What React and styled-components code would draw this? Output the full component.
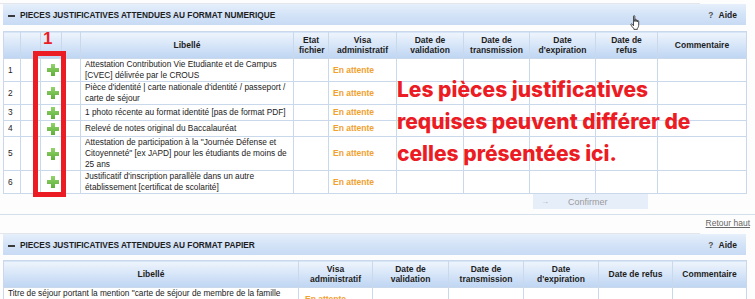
import React from 'react';
import styled, { createGlobalStyle } from 'styled-components';

const BORDER = '#c9d8ea';
const ORANGE = '#f0a12e';
const RED = '#ec1c24';

const GlobalStyle = createGlobalStyle`
  html, body {
    margin: 0;
    padding: 0;
    background: #fff;
  }
  body {
    font-family: "Liberation Sans", Arial, sans-serif;
    color: #222;
  }
`;

const numericRows = [
  { n: 1, label: 'Attestation Contribution Vie Etudiante et de Campus [CVEC] délivrée par le CROUS' },
  { n: 2, label: "Pièce d'identité | carte nationale d'identité / passeport / carte de séjour" },
  { n: 3, label: '1 photo récente au format identité [pas de format PDF]' },
  { n: 4, label: 'Relevé de notes original du Baccalauréat' },
  { n: 5, label: 'Attestation de participation à la "Journée Défense et Citoyenneté" [ex JAPD] pour les étudiants de moins de 25 ans' },
  { n: 6, label: "Justificatif d'inscription parallèle dans un autre établissement [certificat de scolarité]" },
];

const numericCols = [17, 20, 21, 19, 213, 35, 68, 67, 66, 66, 62, 89];
const paperCols = [295, 74, 76, 75, 75, 74, 74];

function PlusIcon() {
  return (
    <svg width="12" height="12" viewBox="0 0 12 12">
      <defs>
        <linearGradient id="pg" x1="0" y1="0" x2="0" y2="1">
          <stop offset="0" stopColor="#93d46c" />
          <stop offset="1" stopColor="#5eae38" />
        </linearGradient>
      </defs>
      <path d="M4 0h4v4h4v4H8v4H4V8H0V4h4z" fill="url(#pg)" />
    </svg>
  );
}

function HandCursor() {
  return (
    <svg width="12" height="16" viewBox="0 0 12 16">
      <path
        d="M3.5 1.2c0-.7 1.3-.7 1.3 0v5.3V4.8c0-.7 1.3-.7 1.3 0v1.7-1c0-.7 1.3-.7 1.3 0v1.3-.6c0-.7 1.3-.7 1.3 0v4c0 1.6-.9 2.6-1.3 3.2v1H3.9v-1C3 13.2 1.3 10.8 1 9.8c-.3-.9.7-1.3 1.2-.6l1.3 1.6z"
        fill="#fff"
        stroke="#222"
        strokeWidth="0.8"
        strokeLinejoin="round"
      />
    </svg>
  );
}

function SectionHeader({ title }) {
  return (
    <Bar>
      <BarTitle>
        <Collapse />
        {title}
      </BarTitle>
      <Help>
        <span className="q">?</span> Aide
      </Help>
    </Bar>
  );
}

export default function App() {
  return (
    <Page>
      <GlobalStyle />
      <Section>
        <TopRule $width={700} />
        <SectionHeader title="PIECES JUSTIFICATIVES ATTENDUES AU FORMAT NUMERIQUE" />
        <Table>
          <colgroup>
            {numericCols.map((w, i) => (
              <col key={i} style={{ width: w }} />
            ))}
          </colgroup>
          <thead>
            <tr>
              <Th />
              <Th />
              <Th />
              <Th />
              <Th>Libellé</Th>
              <Th>Etat fichier</Th>
              <Th>Visa administratif</Th>
              <Th>Date de validation</Th>
              <Th>Date de transmission</Th>
              <Th>Date d'expiration</Th>
              <Th>Date de refus</Th>
              <Th>Commentaire</Th>
            </tr>
          </thead>
          <tbody>
            {numericRows.map((r) => (
              <tr key={r.n}>
                <Td>{r.n}</Td>
                <Td />
                <Td $center>
                  <PlusIcon />
                </Td>
                <Td />
                <Td>{r.label}</Td>
                <Td />
                <Td>
                  <Status>En attente</Status>
                </Td>
                <Td />
                <Td />
                <Td />
                <Td />
                <Td />
              </tr>
            ))}
          </tbody>
        </Table>
        <ButtonRow>
          <ConfirmButton>
            <span className="arrow">→</span>
            Confirmer
          </ConfirmButton>
        </ButtonRow>
      </Section>

      <FullRule />
      <BackTop>
        <a>Retour haut</a>
      </BackTop>

      <Section>
        <TopRule $width={700} />
        <SectionHeader title="PIECES JUSTIFICATIVES ATTENDUES AU FORMAT PAPIER" />
        <Table $gap={5}>
          <colgroup>
            {paperCols.map((w, i) => (
              <col key={i} style={{ width: w }} />
            ))}
          </colgroup>
          <thead>
            <tr>
              <Th>Libellé</Th>
              <Th>Visa administratif</Th>
              <Th>Date de validation</Th>
              <Th>Date de transmission</Th>
              <Th>Date d'expiration</Th>
              <Th>Date de refus</Th>
              <Th>Commentaire</Th>
            </tr>
          </thead>
          <tbody>
            <tr>
              <Td>
                Titre de séjour portant la mention "carte de séjour de membre de la famille d'un citoyen de l'Union"
              </Td>
              <Td $pad={6}>
                <Status>En attente</Status>
              </Td>
              <Td />
              <Td />
              <Td />
              <Td />
              <Td />
            </tr>
          </tbody>
        </Table>
      </Section>

      <Marker>1</Marker>
      <MarkerBox />
      <Notice>
        Les pièces justificatives
        <br />
        requises peuvent différer de
        <br />
        celles présentées ici.
      </Notice>
      <Cursor>
        <HandCursor />
      </Cursor>
    </Page>
  );
}

const Page = styled.div`
  position: relative;
  width: 755px;
  height: 299px;
  overflow: hidden;
  padding-top: 3px;
  box-sizing: border-box;
  background: #fdfdfd;
`;

const Section = styled.section`
  padding: 0 9px 0 3px;
`;

const TopRule = styled.div`
  width: ${(p) => p.$width}px;
  height: 1px;
  margin-left: -3px;
  background: #e3e6ea;
`;

const Bar = styled.div`
  height: 21px;
  display: flex;
  align-items: center;
  justify-content: space-between;
  padding: 0 9px 0 5px;
  background: linear-gradient(to bottom, #e6effb 0%, #d2e2f7 55%, #c8dbf4 100%);
  font-size: 8.3px;
  font-weight: bold;
  color: #1d1d1d;
`;

const BarTitle = styled.div`
  display: flex;
  align-items: center;
`;

const Collapse = styled.span`
  display: inline-block;
  width: 7px;
  height: 2px;
  background: #3a3a3a;
  margin-right: 5px;
  margin-top: 2px;
`;

const Help = styled.div`
  font-size: 8.5px;

  .q {
    color: #555;
    margin-right: 3px;
  }
`;

const Table = styled.table`
  width: 743px;
  margin-top: ${(p) => p.$gap ?? 6}px;
  border-collapse: collapse;
  table-layout: fixed;
  font-size: 8.3px;
  line-height: 11px;
`;

const Th = styled.th`
  height: 27px;
  box-sizing: border-box;
  padding: 0 5px;
  border: 1px solid ${BORDER};
  background: linear-gradient(to bottom, #eef4fc 0%, #d6e5f8 50%, #bed5f2 100%);
  font-weight: bold;
  font-size: 8.5px;
  line-height: 10px;
  text-align: center;
  vertical-align: middle;
  color: #1d1d1d;
`;

const Td = styled.td`
  height: 16px;
  box-sizing: border-box;
  padding: 0 1px 0 ${(p) => p.$pad ?? 4}px;
  border: 1px solid ${BORDER};
  background: #fff;
  vertical-align: middle;
  text-align: ${(p) => (p.$center ? 'center' : 'left')};
  color: #222;
  overflow: hidden;

  svg {
    display: block;
    margin: 0 auto;
  }
`;

const Status = styled.span`
  color: ${ORANGE};
  font-weight: bold;
  font-size: 8.5px;
`;

const ButtonRow = styled.div`
  display: flex;
  justify-content: flex-end;
  padding-right: 98px;
`;

const ConfirmButton = styled.div`
  width: 115px;
  height: 15px;
  display: flex;
  align-items: center;
  background: #e6eefa;
  color: #9a9a9a;
  font-size: 9px;
  box-sizing: border-box;
  padding-left: 8px;

  .arrow {
    font-size: 8px;
    margin-right: 19px;
    color: #a8b4c4;
  }
`;

const FullRule = styled.div`
  height: 1px;
  margin-top: 5px;
  background: #d6e0ec;
`;

const BackTop = styled.div`
  display: flex;
  justify-content: flex-end;
  padding: 3px 5px 0 0;
  height: 15px;
  font-size: 8.5px;

  a {
    color: #666;
    text-decoration: underline;
  }
`;

const Marker = styled.div`
  position: absolute;
  left: 43px;
  top: 29px;
  font-size: 17px;
  font-weight: bold;
  color: ${RED};
`;

const MarkerBox = styled.div`
  position: absolute;
  left: 33px;
  top: 51px;
  width: 33px;
  height: 146px;
  box-sizing: border-box;
  border: 5px solid ${RED};
`;

const Notice = styled.div`
  position: absolute;
  left: 397px;
  top: 74px;
  font-family: Inter, "Open Sans", sans-serif;
  font-weight: 800;
  font-size: 21px;
  line-height: 32px;
  color: ${RED};
  white-space: nowrap;
`;

const Cursor = styled.div`
  position: absolute;
  left: 630px;
  top: 15px;
`;
